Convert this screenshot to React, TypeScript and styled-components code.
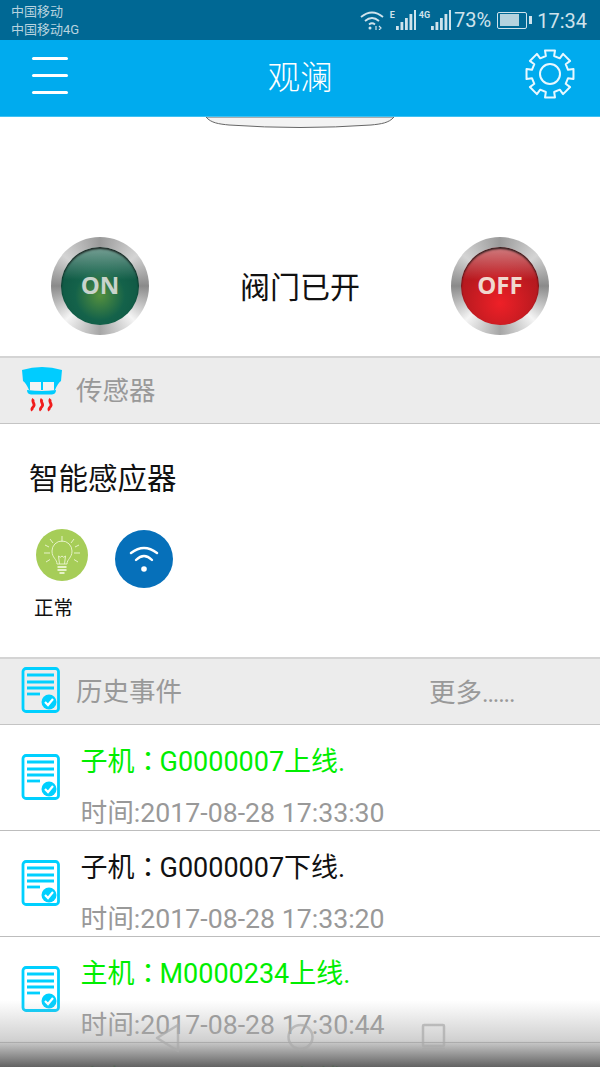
import React from "react";
import styled, { createGlobalStyle } from "styled-components";

const FONT = `Roboto, "Noto Sans CJK SC", sans-serif`;

const GlobalStyle = createGlobalStyle`
  html, body {
    margin: 0;
    padding: 0;
    background: #fff;
  }
  * {
    box-sizing: border-box;
  }
`;

interface EventItem {
  who: string;
  detail: string;
  time: string;
  online: boolean;
}

const events: EventItem[] = [
  { who: "子机", detail: "G0000007上线.", time: "时间:2017-08-28 17:33:30", online: true },
  { who: "子机", detail: "G0000007下线.", time: "时间:2017-08-28 17:33:20", online: false },
  { who: "主机", detail: "M0000234上线.", time: "时间:2017-08-28 17:30:44", online: true },
  { who: "主机", detail: "M0000234上线.", time: "时间:2017-08-28 17:30:10", online: true },
];

// eight teeth, walked round the centre of a 52 box
const gearPath = () => {
  const pt = (deg: number, r: number) => {
    const a = (deg * Math.PI) / 180;
    return `${(26 + r * Math.cos(a)).toFixed(2)} ${(26 + r * Math.sin(a)).toFixed(2)}`;
  };
  let d = "";
  for (let i = 0; i < 8; i++) {
    const a = i * 45 - 90;
    d += `${i === 0 ? "M" : "L"}${pt(a - 13, 18.5)} L${pt(a - 12, 24)} L${pt(a + 12, 24)} L${pt(a + 13, 18.5)} `;
  }
  return d + "Z";
};

const DocIcon = () => (
  <svg width="40" height="46" viewBox="0 0 40 46" fill="none">
    <rect x="2" y="1.500" width="35.500" height="43" rx="3" stroke="#00d0ff" strokeWidth="2.800" />
    <path d="M6 8h27M6 15h27M6 21h27" stroke="#00d0ff" strokeWidth="2.800" />
    <path d="M6 27h13" stroke="#00d0ff" strokeWidth="2.800" />
    <circle cx="28" cy="35" r="7.500" fill="#00d0ff" />
    <path d="M24 35l3 3 5-6" stroke="#fff" strokeWidth="2.200" />
  </svg>
);

const SensorIcon = () => (
  <svg width="42" height="46" viewBox="0 0 42 46">
    <path d="M1 4Q21 -2 41 4L40 15Q37 17 34 24H8Q5 17 2 15Z" fill="#00ccff" />
    <path d="M9 16h11v8H9zM22 16h11v8H22z" fill="#f4f4f4" />
    <path d="M6 24Q21 26 35 24Q35 28 31 28.500H10Q6 28 6 24Z" fill="#00ccff" />
    <path
      d="M12.500 33c-2.500 3 2.500 5 0 7.500s-1 4-1 4M21 33c-2.500 3 2.500 5 0 7.500s-1 4-1 4M29.500 33c-2.500 3 2.500 5 0 7.500s-1 4-1 4"
      stroke="#f01c1c"
      strokeWidth="2.800"
      fill="none"
    />
  </svg>
);

const GearIcon = () => (
  <GearSvg width="52" height="52" viewBox="0 0 52 52" fill="none" stroke="#e8f8ff" strokeWidth="2">
    <circle cx="26" cy="26" r="10" />
    <path d={gearPath()} strokeLinejoin="round" />
  </GearSvg>
);

const BulbIcon = () => (
  <svg width="52" height="52" viewBox="0 0 52 52" fill="none" stroke="#e6f2c8" strokeWidth="1">
    <path d="M21 35c0-5-5-6-5-13a10 10 0 0 1 20 0c0 7-5 8-5 13Z" />
    <path d="M23.500 35l-1-8 1.800 1.300 1.700-1.300 1.700 1.300 1.800-1.300-1 8" />
    <path d="M21.500 38h9M21.500 41h9M23.500 44h5" strokeWidth="1.800" />
    <path d="M26 7v6M14 10l3 4M38 10l-3 4M9 16l4 2M43 16l-4 2M8 24h6M44 24h-6M10 33l4-2.500M42 33l-4-2.500" />
  </svg>
);

const WifiIcon = () => (
  <svg width="30" height="26" viewBox="0 0 30 26" fill="none" stroke="#fff" strokeWidth="2.400" strokeLinecap="round">
    <path d="M2 7Q15 -3 28 7" />
    <path d="M7 14Q15 6 23 14" />
    <circle cx="15" cy="23" r="2.800" fill="#fff" stroke="none" />
  </svg>
);

const SignalBars = ({ label, gap }: { label: string; gap: number }) => (
  <SignalWrap $gap={gap}>
    <SignalLabel>{label}</SignalLabel>
    <svg width="20" height="20" viewBox="0 0 20 20" fill="#cfe3ec">
      <rect x="0" y="16" width="2.800" height="4" />
      <rect x="4.500" y="12" width="2.800" height="8" />
      <rect x="9" y="8" width="2.800" height="12" />
      <rect x="13.500" y="4" width="2.800" height="16" />
      <rect x="18" y="0" width="2" height="20" />
    </svg>
  </SignalWrap>
);

const App = () => {
  return (
    <Screen>
      <GlobalStyle />
      <StatusBar>
        <Carriers>
          <span>中国移动</span>
          <span>中国移动4G</span>
        </Carriers>
        <StatusRight>
          <svg width="24" height="20" viewBox="0 0 24 20" fill="none" stroke="#cfe3ec" strokeWidth="1.800">
            <path d="M1 7Q12 -2 23 7" />
            <path d="M5 11Q12 5 19 11" />
            <path d="M9 14.500Q12 12 15 14.500" />
            <circle cx="10" cy="18" r="1.500" fill="#cfe3ec" stroke="none" />
            <path d="M16 16v4M19 16l2 2-2 2" strokeWidth="1.200" />
          </svg>
          <SignalBars label="E" gap={6} />
          <SignalBars label="4G" gap={3} />
          <Percent>73%</Percent>
          <Battery>
            <BatteryFill />
          </Battery>
          <Clock>17:34</Clock>
        </StatusRight>
      </StatusBar>

      <Header>
        <MenuButton>
          <span />
          <span />
          <span />
        </MenuButton>
        <Title>观澜</Title>
        <GearIcon />
      </Header>

      <Valve>
        <svg width="190" height="13" viewBox="0 0 190 13">
          <path d="M1 0C6 6 14 7 24 8Q95 13 166 8C176 7 184 6 189 0Z" fill="#f3f3f3" stroke="#666" strokeWidth="1" />
        </svg>
        <Controls>
          <RoundButton>
            <ButtonFace $on>ON</ButtonFace>
          </RoundButton>
          <ValveState>阀门已开</ValveState>
          <RoundButton>
            <ButtonFace>OFF</ButtonFace>
          </RoundButton>
        </Controls>
      </Valve>

      <SectionBar>
        <BarIcon>
          <SensorIcon />
        </BarIcon>
        <SectionLabel>传感器</SectionLabel>
      </SectionBar>

      <SensorPanel>
        <SensorName>智能感应器</SensorName>
        <BadgeRow>
          <BulbBadge>
            <BulbIcon />
          </BulbBadge>
          <WifiBadge>
            <WifiIcon />
          </WifiBadge>
        </BadgeRow>
        <SensorStatus>正常</SensorStatus>
      </SensorPanel>

      <SectionBar>
        <BarIcon>
          <DocIcon />
        </BarIcon>
        <SectionLabel>历史事件</SectionLabel>
        <MoreLink>
          更多<Dots>......</Dots>
        </MoreLink>
      </SectionBar>

      <EventList>
        {events.map((e, i) => (
          <EventRow key={i}>
            <RowIcon>
              <DocIcon />
            </RowIcon>
            <EventText>
              <EventTitle $online={e.online}>
                {e.who}
                <Colon>：</Colon>
                {e.detail}
              </EventTitle>
              <EventTime>{e.time}</EventTime>
            </EventText>
          </EventRow>
        ))}
      </EventList>

      <NavOverlay>
        <svg width="25" height="30" viewBox="0 0 25 30" fill="none" stroke="#aaa" strokeWidth="2.500" strokeOpacity="0.7">
          <path d="M23 2V28L2 15Z" strokeLinejoin="round" />
        </svg>
        <svg width="27" height="28" viewBox="0 0 27 28" fill="none" stroke="#aaa" strokeWidth="2.500" strokeOpacity="0.7">
          <circle cx="13.500" cy="14" r="12" />
        </svg>
        <svg width="25" height="28" viewBox="0 0 25 28" fill="none" stroke="#aaa" strokeWidth="2.500" strokeOpacity="0.7">
          <rect x="2" y="2" width="21" height="21" rx="1" />
          <path d="M1 26h23" />
        </svg>
      </NavOverlay>
    </Screen>
  );
};

const Screen = styled.div`
  position: relative;
  width: 600px;
  height: 1067px;
  overflow: hidden;
  background: #fff;
  font-family: ${FONT};
`;

const StatusBar = styled.div`
  height: 40px;
  background: #006894;
  display: flex;
  justify-content: space-between;
  padding: 3px 13px 0 11px;
  color: #cfe3ec;
`;

const Carriers = styled.div`
  display: flex;
  flex-direction: column;
  font-size: 13px;
  line-height: 18px;
  color: #b8d3df;
`;

const StatusRight = styled.div`
  display: flex;
  align-items: center;
  height: 34px;
`;

const SignalWrap = styled.div<{ $gap: number }>`
  display: flex;
  align-items: flex-end;
  margin-left: ${(p) => p.$gap}px;
`;

const SignalLabel = styled.span`
  font-size: 9px;
  font-weight: 700;
  line-height: 9px;
  margin-bottom: 10px;
  margin-right: 1px;
`;

const Percent = styled.span`
  font-size: 20px;
  margin-left: 3px;
`;

const Battery = styled.div`
  position: relative;
  width: 30px;
  height: 17px;
  border: 1.500px solid #cfe3ec;
  border-radius: 2px;
  padding: 1.500px;
  margin-left: 6px;
  margin-right: 10px;

  &::after {
    content: "";
    position: absolute;
    right: -5.500px;
    top: 3px;
    width: 2.500px;
    height: 8px;
    background: #cfe3ec;
  }
`;

const BatteryFill = styled.div`
  width: 78%;
  height: 100%;
  background: #b4d2de;
`;

const Clock = styled.span`
  font-size: 20px;
  padding-top: 1px;
`;

const Header = styled.div`
  height: 77px;
  background: #00abee;
  border-bottom: 1px solid #3fc1f3;
  display: flex;
  align-items: center;
  justify-content: space-between;
  padding: 0 24px 6px 32px;
  position: relative;
`;

const GearSvg = styled.svg`
  margin-top: -3px;
`;

const MenuButton = styled.div`
  width: 36px;
  display: flex;
  flex-direction: column;
  gap: 14px;

  span {
    display: block;
    height: 3px;
    border-radius: 2px;
    background: #fff;
  }
`;

const Title = styled.div`
  position: absolute;
  left: 0;
  right: 0;
  top: 18px;
  text-align: center;
  color: #fff;
  font-size: 32.500px;
  line-height: 40px;
  font-weight: 300;
`;

const Valve = styled.div`
  height: 239px;
  display: flex;
  flex-direction: column;
  align-items: center;
`;

const Controls = styled.div`
  width: 100%;
  margin-top: 107px;
  display: flex;
  align-items: center;
  justify-content: space-between;
  padding: 0 51px;
`;

const RoundButton = styled.div`
  width: 98px;
  height: 98px;
  padding: 10px;
  border-radius: 50%;
  background: conic-gradient(
    #9a9a9a 0deg,
    #d4d4d4 50deg,
    #8a8a8a 90deg,
    #f4f4f4 135deg,
    #a6a6a6 180deg,
    #f4f4f4 225deg,
    #8a8a8a 270deg,
    #d4d4d4 310deg,
    #9a9a9a 360deg
  );
`;

const ButtonFace = styled.div<{ $on?: boolean }>`
  width: 100%;
  height: 100%;
  border-radius: 50%;
  display: flex;
  align-items: center;
  justify-content: center;
  padding-bottom: 4px;
  font-family: "Open Sans", sans-serif;
  font-weight: 700;
  font-size: 24px;
  color: ${(p) => (p.$on ? "#c9d3cc" : "#f0d8cf")};
  background: linear-gradient(to bottom, rgba(255, 255, 255, 0.42) 2%, rgba(255, 255, 255, 0) 42%),
    ${(p) =>
      p.$on
        ? "radial-gradient(circle at 50% 62%, #55903e 0%, #14624a 40%, #0a4e3e 100%)"
        : "radial-gradient(circle at 50% 72%, #ee2027 0%, #bb1a20 52%, #a0161b 100%)"};
  box-shadow: inset 0 2px 2px rgba(0, 0, 0, 0.75);
`;

const ValveState = styled.div`
  font-size: 30px;
  color: #111;
  margin-top: -2px;
`;

const SectionBar = styled.div`
  height: 68px;
  background: #ececec;
  border-top: 2px solid #d4d4d4;
  border-bottom: 1px solid #c4c4c4;
  display: flex;
  align-items: center;
  position: relative;
`;

const BarIcon = styled.div`
  width: 76px;
  padding-left: 21px;
  margin-top: -3px;
  display: flex;
  align-items: center;
`;

const SectionLabel = styled.div`
  font-size: 26.500px;
  color: #999;
  margin-top: -4px;
`;

const MoreLink = styled.div`
  position: absolute;
  left: 429px;
  top: 17px;
  font-size: 26.500px;
  line-height: 34px;
  color: #999;
`;

const Dots = styled.span`
  letter-spacing: -1.200px;
  font-size: 25px;
`;

const SensorPanel = styled.div`
  height: 233px;
  padding: 35px 0 0 29px;
`;

const SensorName = styled.div`
  font-size: 29.500px;
  line-height: 40px;
  color: #111;
`;

const BadgeRow = styled.div`
  margin-top: 30px;
  margin-left: 7px;
  display: flex;
  align-items: flex-start;
  gap: 26px;
`;

const BulbBadge = styled.div`
  width: 52px;
  height: 52px;
  border-radius: 50%;
  background: #a6cd58;
`;

const WifiBadge = styled.div`
  width: 58px;
  height: 58px;
  margin-left: 1px;
  margin-top: 1px;
  border-radius: 50%;
  background: #0670ba;
  display: flex;
  align-items: center;
  justify-content: center;
`;

const SensorStatus = styled.div`
  margin: 8px 0 0 5px;
  font-size: 19.500px;
  line-height: 26px;
  color: #111;
`;

const EventList = styled.div`
  display: flex;
  flex-direction: column;
`;

const EventRow = styled.div`
  height: 106px;
  flex-shrink: 0;
  border-bottom: 1px solid #bdbdbd;
  display: flex;
`;

const RowIcon = styled.div`
  width: 80.500px;
  padding: 29px 0 0 21px;
`;

const EventText = styled.div`
  padding-top: 18px;
`;

const EventTitle = styled.div<{ $online: boolean }>`
  font-family: Roboto, "Noto Sans CJK TC", sans-serif;
  font-size: 27px;
  line-height: 38px;
  color: ${(p) => (p.$online ? "#00ee00" : "#111")};
`;

const Colon = styled.span`
  margin-right: -2px;
`;

const EventTime = styled.div`
  margin-top: 14px;
  font-size: 26.700px;
  line-height: 36px;
  color: #999;
`;

const NavOverlay = styled.div`
  position: absolute;
  left: 0;
  right: 0;
  bottom: 0;
  height: 67px;
  background: linear-gradient(
    to bottom,
    rgba(255, 255, 255, 0) 0%,
    rgba(170, 170, 170, 0.55) 60%,
    rgba(90, 90, 90, 0.95) 100%
  );
  display: flex;
  justify-content: center;
  align-items: flex-start;
  gap: 107px;
  padding: 23px 0 0 1px;
`;

export default App;
